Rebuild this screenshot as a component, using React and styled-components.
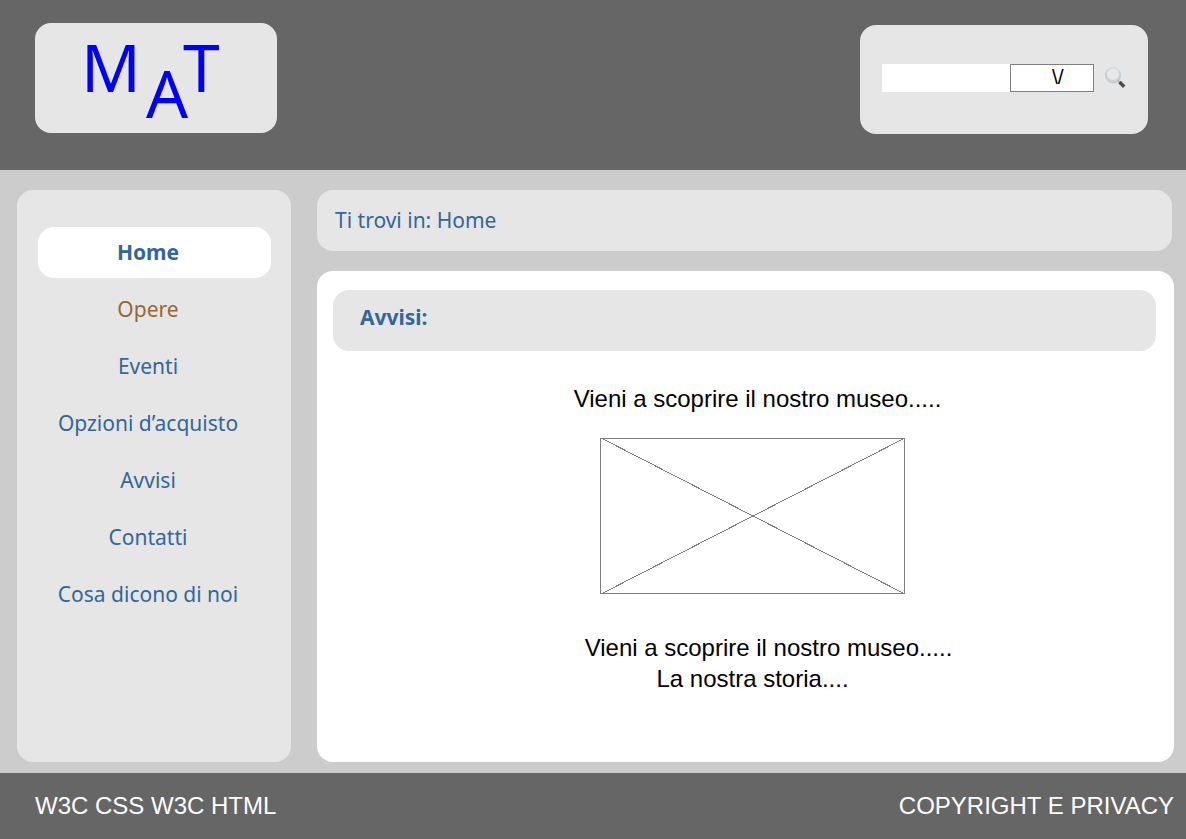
import React from "react";
import styled, { createGlobalStyle } from "styled-components";

const GlobalStyle = createGlobalStyle`
  *, *::before, *::after { box-sizing: border-box; }
  body {
    margin: 0;
    background: #cccccc;
    color: #000000;
    font-family: "Liberation Sans", Arial, sans-serif;
    font-size: 24px;
    line-height: 31px;
  }
`;

const humanist = `"Noto Sans", "Open Sans", sans-serif`;

const Page = styled.div`
  display: flex;
  flex-direction: column;
  min-height: 100vh;
`;

const Header = styled.header`
  display: flex;
  justify-content: space-between;
  align-items: flex-start;
  padding: 23px 38px 36px 35px;
  background: #666666;
`;

const Panel = styled.div`
  background: ${(p) => (p.$white ? "#ffffff" : "#e6e6e6")};
  border-radius: 16px;
`;

const Logo = styled(Panel)`
  display: flex;
  width: 242px;
  height: 110px;
  padding: 10px 0 0 46px;
  color: #0000ff;
  font-family: ${humanist};
  font-size: 66px;
  line-height: 66px;
  text-decoration: none;
`;

const Letter = styled.span`
  margin-left: ${(p) => p.$shift || 0}px;
  padding-top: ${(p) => p.$drop || 0}px;
`;

const SearchForm = styled(Panel)`
  display: flex;
  align-items: center;
  width: 288px;
  height: 109px;
  margin-top: 2px;
  padding: 0 20px 4px 22px;
`;

const SearchInput = styled.input`
  flex: 1;
  min-width: 0;
  height: 28px;
  padding: 0 6px;
  border: 0;
  border-radius: 0;
  background: #ffffff;
  font: 16px "Liberation Sans", Arial, sans-serif;
`;

const SearchSelect = styled.select`
  appearance: none;
  width: 84px;
  height: 28px;
  padding: 0 0 2px 41px;
  border: 1px solid #808080;
  border-radius: 0;
  background: #ffffff;
  color: #000000;
  font: 21px "Liberation Sans", Arial, sans-serif;
`;

const SearchButton = styled.button`
  display: flex;
  margin-left: 10px;
  padding: 0;
  border: 0;
  background: none;
  cursor: pointer;
`;

const Main = styled.div`
  display: flex;
  flex: 1;
  gap: 26px;
  padding: 20px 12px 11px 17px;
`;

const Sidebar = styled(Panel)`
  flex: 0 0 274px;
  padding: 37px 20px 37px 21px;
`;

const Menu = styled.ul`
  display: flex;
  flex-direction: column;
  gap: 6px;
  margin: 0;
  padding: 0;
  list-style: none;
`;

const MenuLink = styled.a`
  display: block;
  padding: 10px 13px 10px 0;
  border-radius: 16px;
  background: ${(p) => (p.$active ? "#ffffff" : "transparent")};
  color: ${(p) => (p.$visited ? "#996633" : "#336699")};
  font-family: ${humanist};
  font-size: 21px;
  font-weight: ${(p) => (p.$active ? 700 : 400)};
  text-align: center;
  text-decoration: none;
`;

const Content = styled.main`
  display: flex;
  flex: 1;
  flex-direction: column;
  gap: 20px;
  min-width: 0;
`;

const Breadcrumb = styled(Panel)`
  margin-right: 2px;
  padding: 15px 18px;
  color: #336699;
  font-family: ${humanist};
  font-size: 21px;
`;

const Card = styled(Panel)`
  flex: 1;
  padding: 19px 18px 19px 16px;
`;

const CardHeading = styled(Panel)`
  margin: 0;
  padding: 12px 27px 18px;
  color: #336699;
  font-family: ${humanist};
  font-size: 21px;
  font-weight: 700;
`;

const Notices = styled.div`
  display: flex;
  flex-direction: column;
  align-items: center;
  padding: 32px 0 0 16px;
`;

const Notice = styled.p`
  margin: 0;
  padding-left: ${(p) => p.$indent || 0}px;
`;

const Placeholder = styled.svg`
  display: block;
  margin: 24px 0 38px;
  stroke: #808080;
  fill: none;
  shape-rendering: crispEdges;
`;

const Footer = styled.footer`
  display: flex;
  justify-content: space-between;
  padding: 17px 12px 18px 35px;
  background: #666666;
  color: #ffffff;
`;

const menu = [
  { label: "Home", active: true },
  { label: "Opere", visited: true },
  { label: "Eventi" },
  { label: "Opzioni d’acquisto" },
  { label: "Avvisi" },
  { label: "Contatti" },
  { label: "Cosa dicono di noi" },
];

function Magnifier() {
  return (
    <svg width="24" height="24" viewBox="0 0 24 24" aria-hidden="true">
      <circle cx="9" cy="9.5" r="7.5" fill="#d0d0d0" stroke="#b5cbdc" />
      <circle cx="9" cy="8" r="6" fill="#e8e8e8" />
      <path d="M14 14.5l2 2" stroke="#aaaaaa" strokeWidth="1.5" />
      <path d="M15.5 16l4.7 4.7" stroke="#4d4d4d" strokeWidth="3.5" />
    </svg>
  );
}

export default function App() {
  return (
    <Page>
      <GlobalStyle />
      <Header>
        <Logo as="a" href="#" aria-label="MAT">
          <Letter>M</Letter>
          <Letter $shift={5} $drop={26}>A</Letter>
          <Letter $shift={-5}>T</Letter>
        </Logo>
        <SearchForm as="form" role="search" onSubmit={(e) => e.preventDefault()}>
          <SearchInput type="text" aria-label="Cerca" />
          <SearchSelect aria-label="Categoria">
            <option>{"\\/"}</option>
          </SearchSelect>
          <SearchButton type="submit" aria-label="Avvia ricerca">
            <Magnifier />
          </SearchButton>
        </SearchForm>
      </Header>
      <Main>
        <Sidebar as="nav">
          <Menu>
            {menu.map((item) => (
              <li key={item.label}>
                <MenuLink href="#" $active={item.active} $visited={item.visited}>
                  {item.label}
                </MenuLink>
              </li>
            ))}
          </Menu>
        </Sidebar>
        <Content>
          <Breadcrumb>Ti trovi in: Home</Breadcrumb>
          <Card as="section" $white>
            <CardHeading as="h1">Avvisi:</CardHeading>
            <Notices>
              <Notice $indent={10}>Vieni a scoprire il nostro museo.....</Notice>
              <Placeholder width="305" height="156" role="img" aria-label="Immagine del museo">
                <rect x="0.5" y="0.5" width="304" height="155" />
                <path d="M2 0.5L304 155.5M304 0.5L2 155.5" />
              </Placeholder>
              <Notice $indent={32}>Vieni a scoprire il nostro museo.....</Notice>
              <Notice>La nostra storia....</Notice>
            </Notices>
          </Card>
        </Content>
      </Main>
      <Footer>
        <span>W3C CSS W3C HTML</span>
        <span>COPYRIGHT E PRIVACY</span>
      </Footer>
    </Page>
  );
}
